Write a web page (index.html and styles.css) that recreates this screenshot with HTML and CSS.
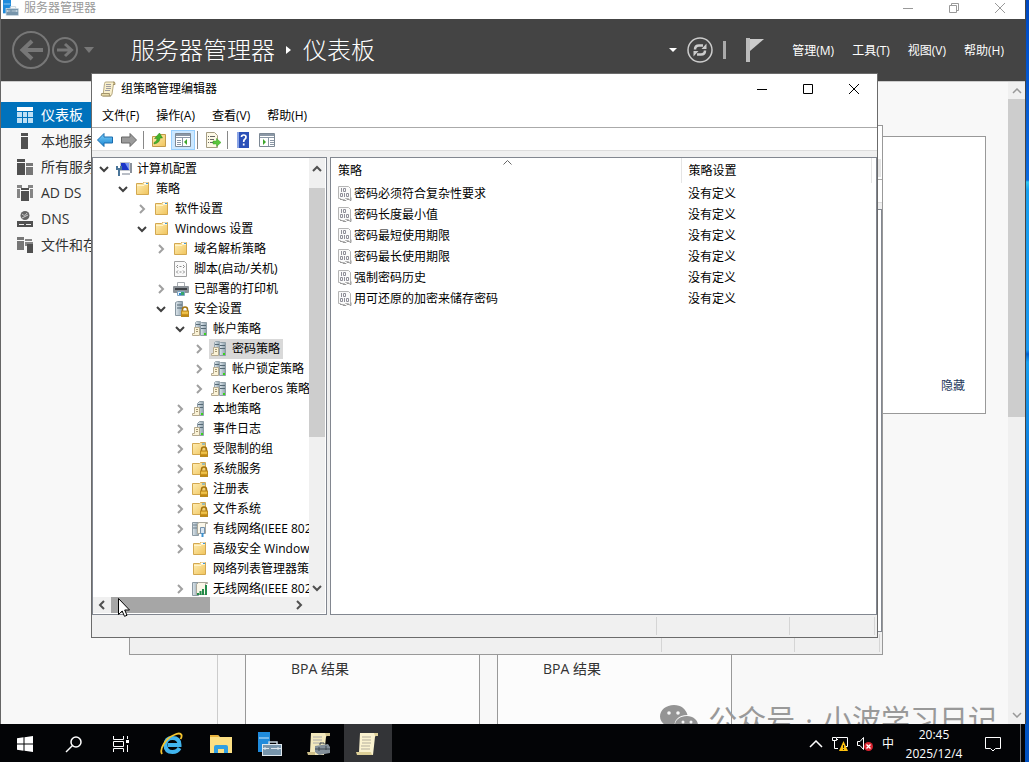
FILE: index.html
```html
<!DOCTYPE html>
<html lang="zh-CN">
<head>
    <meta charset="UTF-8">
    <title>服务器管理器</title>
    <link rel="stylesheet" href="styles.css">
</head>
<body>
    <!-- 图标 -->
    <svg class="defs" aria-hidden="true">
        <defs>
            <linearGradient id="gFolder" x1="0" y1="0" x2="1" y2="1">
                <stop offset="0" stop-color="#ffeeb5"/><stop offset="1" stop-color="#f0c45c"/>
            </linearGradient>
            <linearGradient id="gServer" x1="0" y1="0" x2="1" y2="0">
                <stop offset="0" stop-color="#dfe8ee"/><stop offset="1" stop-color="#8fa1ac"/>
            </linearGradient>
            <linearGradient id="gBlue" x1="0" y1="0" x2="0" y2="1">
                <stop offset="0" stop-color="#7fd0f8"/><stop offset="1" stop-color="#1583d2"/>
            </linearGradient>
            <linearGradient id="gGold" x1="0" y1="0" x2="0" y2="1">
                <stop offset="0" stop-color="#f0bd3c"/><stop offset="1" stop-color="#b57d0c"/>
            </linearGradient>
        </defs>
        <symbol id="i-right" viewBox="0 0 16 16"><path d="M6 4l4 4-4 4" fill="none" stroke="#a0a0a0" stroke-width="2"/></symbol>
        <symbol id="i-down" viewBox="0 0 16 16"><path d="M4 6l4 4 4-4" fill="none" stroke="#404040" stroke-width="2"/></symbol>
        <symbol id="i-folder" viewBox="0 0 16 16">
            <path d="M1.500 2.500h6l1-1h5v12h-12z" fill="url(#gFolder)" stroke="#d3a850"/>
            <path d="M9 2.500h4" stroke="#fff" stroke-width="2"/><path d="M11 2.500h2" stroke="#3d9be0"/>
            <path d="M2 4.500h7l1-1h3" stroke="#fff3cb" fill="none"/>
        </symbol>
        <symbol id="i-lock" viewBox="0 0 16 16">
            <path d="M9.500 10V8.500a2.500 2.500 0 0 1 5 0V10" fill="none" stroke="#a47510" stroke-width="1.500"/>
            <rect x="8.500" y="10" width="7" height="5.500" fill="url(#gGold)" stroke="#b98a20"/>
            <path d="M9 12h6" stroke="#ffd968"/>
        </symbol>
        <symbol id="i-folder-lock" viewBox="0 0 16 16">
            <path d="M.5 2.500h7l1-1h5v12H.5z" fill="url(#gFolder)" stroke="#d3a850"/>
            <path d="M10 3h3" stroke="#3d9be0"/>
            <use href="#i-lock"/>
        </symbol>
        <symbol id="i-server-lock" viewBox="0 0 16 16">
            <path d="M2.500 1.500l2-1h5v14h-7z" fill="url(#gServer)" stroke="#8796a0"/>
            <path d="M4 4h5M4 7h5" stroke="#506470"/>
            <use href="#i-lock"/>
        </symbol>
        <symbol id="i-policy" viewBox="0 0 16 16">
            <path d="M3.500 1.500l1-1h4v9h-5z" fill="url(#gServer)" stroke="#9aa8b1"/>
            <path d="M8.500 2.500l1-1h5v13h-6z" fill="url(#gServer)" stroke="#8f9ea7"/>
            <path d="M9 4.500h5M9 7.500h5M4 3.500h4" stroke="#566975"/>
            <rect x="12" y="12" width="2" height="2" fill="#37d51d"/>
            <path d="M2.500 6.500h5v8h-7v-2h2z" fill="#fbf3d6" stroke="#b5aa90"/>
            <path d="M4 8.500h2M4 10.500h2" stroke="#a39674"/>
        </symbol>
        <symbol id="i-local" viewBox="0 0 16 16">
            <path d="M5.500 2.500l2-2h4v14h-6z" fill="url(#gServer)" stroke="#8f9ea7"/>
            <path d="M6 3.500h5M6 6.500h5" stroke="#566975"/>
            <rect x="9" y="12" width="2" height="2" fill="#37d51d"/>
            <path d="M2.500 6.500h5v8h-7v-2h2z" fill="#fbf3d6" stroke="#b5aa90"/>
            <path d="M4 8.500h2M4 10.500h2" stroke="#a39674"/>
        </symbol>
        <symbol id="i-computer" viewBox="0 0 16 16">
            <rect x="4.500" y="1.500" width="9" height="8" fill="#1b35c8" stroke="#c3c7ce"/>
            <path d="M9 2h4v7z" fill="#7a96f0"/>
            <path d="M14 2h2v10h-2z" fill="#8c929c"/>
            <path d="M6 12h8v2H6z" fill="#b9bec6"/>
            <path d="M3 15V8M1 5v3h4V5" fill="none" stroke="#4a7599" stroke-width="2"/>
        </symbol>
        <symbol id="i-script" viewBox="0 0 16 16">
            <path d="M1.500.5h10l2 2v13h-12z" fill="#fafafa" stroke="#a0a0a0"/>
            <path d="M5 4L3.500 5.500 5 7M10 4l1.500 1.500L10 7M5 9.500L3.500 11 5 12.500M10 9.500l1.500 1.500L10 12.500M6.500 5.500h2M6.500 11h2" fill="none" stroke="#8a8a8a"/>
        </symbol>
        <symbol id="i-printer" viewBox="0 0 16 16">
            <path d="M4.500 1.500h7v4h-7z" fill="#fff" stroke="#a8adb2"/>
            <rect x="0" y="5" width="16" height="7" rx="1" fill="#8c9298"/>
            <path d="M2 7h12v2H2z" fill="#3e4247"/>
            <path d="M4.500 10.500h7v4h-7z" fill="#e8f3fb" stroke="#7fa4c0"/>
            <rect x="8" y="11" width="3" height="3" fill="#35a56c"/><rect x="6" y="12" width="2" height="2" fill="#2e86d5"/>
        </symbol>
        <symbol id="i-wired" viewBox="0 0 16 16">
            <path d="M.5 1.500h6v13h-6z" fill="url(#gServer)" stroke="#8c9aa3"/>
            <path d="M1 4h5M1 7h5" stroke="#6c7f8b"/>
            <path d="M5.500 3.500v9h8v-10h2v-1h-9z" fill="#faf6e8" stroke="#aaa79a"/>
            <path d="M8.500 6.500h4v6h-4z" fill="#d8e6f2" stroke="#7591ac"/><path d="M10.500 12v4" stroke="#3d93d1" stroke-width="2"/>
        </symbol>
        <symbol id="i-wireless" viewBox="0 0 16 16">
            <path d="M.5 1.500h6v13h-6z" fill="url(#gServer)" stroke="#8c9aa3"/>
            <path d="M4.500 3.500v10h9v-11h2v-1h-9z" fill="#faf6e8" stroke="#aaa79a"/>
            <path d="M6 14v-2M8.500 14v-4M11 14V8M14 14V4" stroke="#238b4a" stroke-width="2"/>
        </symbol>
        <symbol id="i-setting" viewBox="0 0 16 16">
            <path d="M.5.5h10l2 2v11h-1l-1-1h-3l-1 1h-3l-1-1h-2z" fill="#fafafa" stroke="#b5b5b5"/>
            <path d="M2 13.500h2l1 1h3l1-1h2l1 1h1v-3" fill="none" stroke="#999"/>
            <path d="M3.500 2v4M5.500 2.500h2v3h-2zM2.500 7.500h2v3h-2zM6.500 7v4M8.500 7.500h2v3h-2z" fill="none" stroke="#8f8f98"/>
        </symbol>
        <symbol id="i-scroll" viewBox="0 0 16 16">
            <path d="M4.500 2.500q0-1.500 1.500-1.500h8.500q-1 1-1 2l-1.500 10q-.5 2-2 2H3z" fill="#f9f0cd" stroke="#b8aa82"/>
            <path d="M1.500 12.500h8q-1 2.500 1 2.500H2.500q-2 0-1-2.500z" fill="#e8dba9" stroke="#a3946c"/>
            <path d="M13 1q2.500 0 2 2.500h-2" fill="#d9c98f" stroke="#a3946c"/>
            <path d="M6 3.500h5M6 5.500h5M6 7.500h5M5 9.500h5" stroke="#9e9ca0"/>
        </symbol>
        <symbol id="i-x" viewBox="0 0 12 12"><path d="M1 1l10 10M11 1L1 11" fill="none" stroke="currentColor"/></symbol>
        <symbol id="i-min" viewBox="0 0 12 12"><path d="M1 6.500h10" stroke="currentColor"/></symbol>
        <symbol id="i-max" viewBox="0 0 12 12"><path d="M1.500 1.500h9v9h-9z" fill="none" stroke="currentColor"/></symbol>
        <symbol id="i-restore" viewBox="0 0 12 12"><path d="M1.500 3.500h7v7h-7zM3.500 3V1.500h7v7H9" fill="none" stroke="currentColor"/></symbol>
        <symbol id="i-manager" viewBox="0 0 24 24">
            <path d="M0 0h12v20H0z" fill="#1f8bdc"/><path d="M1 6h10" stroke="#cfe8fa"/>
            <path d="M11 13v-3h8v3" fill="none" stroke="#c9d6df" stroke-width="1.500"/>
            <rect x="4.500" y="12.500" width="19" height="11" fill="#7795ab" stroke="#dfe8ee"/>
            <path d="M5 16.500h6M13 16.500h10M7 15v3M20 15v3" stroke="#dfe8ee"/>
        </symbol>
    </svg>

    <div class="desktop">
        <div class="manager">
            <div class="manager-title">
                <svg class="icon"><use href="#i-manager"/></svg>
                <span>服务器管理器</span>
                <div class="win-buttons">
                    <button aria-label="最小化"><svg><use href="#i-min"/></svg></button>
                    <button aria-label="还原"><svg><use href="#i-restore"/></svg></button>
                    <button aria-label="关闭"><svg><use href="#i-x"/></svg></button>
                </div>
            </div>

            <header class="manager-header">
                <button class="nav-back" aria-label="后退">
                    <svg width="38" height="38" viewBox="0 0 38 38" fill="none" stroke="#777"><circle cx="19" cy="19" r="18" stroke-width="2"/><path d="M31 19H10M20 10l-9.500 9 9.500 9" stroke-width="4"/></svg>
                </button>
                <button class="nav-forward" aria-label="前进">
                    <svg width="26" height="26" viewBox="0 0 26 26" fill="none" stroke="#777"><circle cx="13" cy="13" r="12" stroke-width="2"/><path d="M5 13h14M13 7l6.500 6-6.500 6" stroke-width="3"/></svg>
                </button>
                <button class="nav-more" aria-label="更多"><svg width="10" height="6"><path d="M0 0h10L5 6z" fill="#777"/></svg></button>
                <h1>服务器管理器<svg width="6" height="8"><path d="M0 0l5 4-5 4z" fill="#fff"/></svg>仪表板</h1>
                <div class="header-tools">
                    <button aria-label="选项"><svg width="8" height="5"><path d="M0 0h8L4 4z" fill="#fff"/></svg></button>
                    <button aria-label="刷新">
                        <svg width="26" height="26" viewBox="0 0 26 26" fill="none" stroke="#ccc"><circle cx="13" cy="13" r="12" stroke-width="1.500"/><path d="M8 12.500q0-4 4-4h4M18 13.500q0 4-4 4h-4" stroke-width="2.500"/><path d="M14.500 12h5V6.500zM11.500 14h-5v5.500z" fill="#ccc" stroke="none"/></svg>
                    </button>
                    <span class="bar"></span>
                    <button aria-label="通知"><svg width="18" height="24"><path d="M0 0h4v24H0z" fill="#bbb"/><path d="M4 1h14L4 13z" fill="#ccc"/></svg></button>
                </div>
                <nav class="header-menu">
                    <a href="#">管理(M)</a><a href="#">工具(T)</a><a href="#">视图(V)</a><a href="#">帮助(H)</a>
                </nav>
            </header>

            <div class="manager-body">
                <nav class="sidebar">
                    <a href="#" class="active"><svg width="16" height="16"><path d="M0 0h16v4H0z" fill="#fff"/><path d="M0 5h5v5H0zM6 5h4v5H6zM11 5h5v5h-5zM0 11h5v5H0zM6 11h4v5H6zM11 11h5v5h-5z" fill="#bfe0f5"/></svg>仪表板</a>
                    <a href="#"><svg width="16" height="16"><path d="M4 0h7v3H4zM4 4h7v12H4z" fill="#505050"/></svg>本地服务器</a>
                    <a href="#"><svg width="16" height="16"><path d="M0 0h8v3H0zM0 4h8v12H0z" fill="#505050"/><path d="M9 4h7v3H9zM9 8h7v8H9z" fill="#777"/></svg>所有服务器</a>
                    <a href="#"><svg width="16" height="16"><path d="M0 0h5v3H0zM0 4h3v9H0zM11 0h5v3h-5zM13 4h3v9h-3z" fill="#858585"/><path d="M4 3h8v2H4zM4 6h8v10H4z" fill="#505050"/></svg>AD DS</a>
                    <a href="#"><svg width="16" height="16"><circle cx="8" cy="4.500" r="4.500" fill="#666"/><path d="M5 3q3 3 5-1M5 7l6-3" stroke="#ccc" fill="none"/><path d="M0 10h16v6H0z" fill="#505050"/><path d="M2 13.500h5M9 13.500h5" stroke="#eee"/></svg>DNS</a>
                    <a href="#"><svg width="16" height="16"><path d="M0 0h7v3H0zM0 4h7v9H0z" fill="#777"/><path d="M8 2h7v2H8zM8 5h8v4H8z" fill="#858585"/><path d="M10 7h6v9h-6z" fill="#505050"/></svg>文件和存储服务</a>
                </nav>
                <main class="content">
                    <section class="welcome"><a href="#">隐藏</a></section>
                    <div class="cards">
                        <section class="card">BPA 结果</section>
                        <section class="card">BPA 结果</section>
                    </div>
                </main>
                <div class="page-scroll">
                    <svg width="10" height="6"><path d="M1 5l4-4 4 4" fill="none" stroke="#999" stroke-width="1.500"/></svg>
                    <div class="thumb"></div>
                    <svg width="10" height="6"><path d="M1 1l4 4 4-4" fill="none" stroke="#999" stroke-width="1.500"/></svg>
                </div>
            </div>
            <div class="watermark">
                <svg width="38" height="30" viewBox="0 0 38 30"><path d="M14 0C6 0 0 5 0 11.500 0 15 2 18 5 20l-1 5 5-3q3 1 6 1C13 16 18 10 27.500 10 26 4 21 0 14 0z" fill="#949494"/><path d="M27 11c-7 0-12 4-12 9s5 9 12 9q2 0 4-.5l4 2-1-3.500c2-2 4-4 4-7 0-5-5-9-11-9z" fill="#949494"/><g fill="#f8f8f8"><circle cx="9" cy="8" r="1.800"/><circle cx="18" cy="8" r="1.800"/><circle cx="23" cy="17" r="1.500"/><circle cx="31" cy="17" r="1.500"/></g></svg>
                <span>公众号</span><span>·</span><span>小波学习日记</span>
            </div>
        </div>

        <!-- 后面的组策略管理窗口 -->
        <div class="window window-back">
            <div class="title-bar"></div>
            <div class="menu-bar"><span class="mdi"></span></div>
            <div class="tool-bar"></div>
            <div class="panes"><div class="list-pane"></div></div>
            <div class="status-bar"><span></span><span></span><span></span></div>
        </div>

        <div class="window window-front">
            <div class="title-bar">
                <svg class="icon"><use href="#i-scroll"/></svg>
                <span>组策略管理编辑器</span>
                <div class="win-buttons">
                    <button aria-label="最小化"><svg><use href="#i-min"/></svg></button>
                    <button aria-label="最大化"><svg><use href="#i-max"/></svg></button>
                    <button aria-label="关闭"><svg><use href="#i-x"/></svg></button>
                </div>
            </div>
            <div class="menu-bar">
                <button>文件(F)</button><button>操作(A)</button><button>查看(V)</button><button>帮助(H)</button>
            </div>
            <div class="tool-bar">
                <button aria-label="后退"><svg class="icon" viewBox="0 0 16 16"><path d="M.5 8L7 1.500V5h8.500v6H7v3.500z" fill="url(#gBlue)" stroke="#1b6cae"/></svg></button>
                <button aria-label="前进"><svg class="icon" viewBox="0 0 16 16"><path d="M15.500 8L9 1.500V5H.5v6H9v3.500z" fill="#9b9b9b" stroke="#666"/></svg></button>
                <span class="sep"></span>
                <button aria-label="上一级"><svg class="icon" viewBox="0 0 16 16"><path d="M1.500 4.500h7l1-2h5v12h-13z" fill="url(#gFolder)" stroke="#c29a4a"/><path d="M3 10.500q3-1 3-4H3.500L8.500 1l3 5H9q0 5-6 6z" fill="#43b32b" stroke="#2a8018" stroke-width=".5"/></svg></button>
                <button class="on" aria-label="显示控制台树"><svg class="icon" viewBox="0 0 16 16"><path d="M.5 1.500h15v13H.5z" fill="#fff" stroke="#7c8894"/><path d="M1 3h14" stroke="#8b98a6" stroke-width="2"/><path d="M1 5.500h14M7.500 6v8M2 8.500h4M2 10.500h4M2 12.500h4" stroke="#8b98a6"/><path d="M12 7v6L9 10z" fill="#3da62c"/></svg></button>
                <span class="sep"></span>
                <button aria-label="导出列表"><svg class="icon" viewBox="0 0 16 16"><path d="M1.500.5h8l3 3v12h-11z" fill="#fdf9e6" stroke="#a59d82"/><path d="M3 4.500h1M5 4.500h5M3 7.500h1M5 7.500h4M3 10.500h1M5 10.500h4" stroke="#666"/><path d="M8 9h3.500V6.500L16 10.500l-4.500 4V12H8z" fill="#5ac63c" stroke="#3a9a24" stroke-width=".5"/></svg></button>
                <span class="sep"></span>
                <button aria-label="帮助"><svg class="icon" viewBox="0 0 16 16"><path d="M2 0h12v16H2z" fill="#2b50b8"/><path d="M2 0h2v16H2z" fill="#8ba5e6"/><path d="M6.500 5q0-2 2.200-2T11 5q0 1.500-1.200 2.200T8.700 10M8.700 11.500v2" fill="none" stroke="#fff" stroke-width="1.700"/></svg></button>
                <button aria-label="显示操作窗格"><svg class="icon" viewBox="0 0 16 16"><path d="M.5 1.500h15v13H.5z" fill="#fff" stroke="#7c8894"/><path d="M1 3h14" stroke="#8b98a6" stroke-width="2"/><path d="M1 5.500h14M9.500 6v8M11 8.500h4M11 10.500h4M11 12.500h4" stroke="#8b98a6"/><path d="M4 7v6l3-3z" fill="#3da62c"/></svg></button>
            </div>
            <div class="panes">
                <div class="tree-pane">
                    <div class="tree">
                        <ul>
                            <li><div class="node"><svg class="icon"><use href="#i-down"/></svg><span><svg class="icon"><use href="#i-computer"/></svg>计算机配置</span></div>
                            <ul>
                                <li><div class="node"><svg class="icon"><use href="#i-down"/></svg><span><svg class="icon"><use href="#i-folder"/></svg>策略</span></div>
                                <ul>
                                    <li><div class="node"><svg class="icon"><use href="#i-right"/></svg><span><svg class="icon"><use href="#i-folder"/></svg>软件设置</span></div></li>
                                    <li><div class="node"><svg class="icon"><use href="#i-down"/></svg><span><svg class="icon"><use href="#i-folder"/></svg>Windows 设置</span></div>
                                    <ul>
                                        <li><div class="node"><svg class="icon"><use href="#i-right"/></svg><span><svg class="icon"><use href="#i-folder"/></svg>域名解析策略</span></div></li>
                                        <li><div class="node"><svg class="icon"></svg><span><svg class="icon"><use href="#i-script"/></svg>脚本(启动/关机)</span></div></li>
                                        <li><div class="node"><svg class="icon"><use href="#i-right"/></svg><span><svg class="icon"><use href="#i-printer"/></svg>已部署的打印机</span></div></li>
                                        <li><div class="node"><svg class="icon"><use href="#i-down"/></svg><span><svg class="icon"><use href="#i-server-lock"/></svg>安全设置</span></div>
                                        <ul>
                                            <li><div class="node"><svg class="icon"><use href="#i-down"/></svg><span><svg class="icon"><use href="#i-policy"/></svg>帐户策略</span></div>
                                            <ul>
                                                <li><div class="node"><svg class="icon"><use href="#i-right"/></svg><span class="selected"><svg class="icon"><use href="#i-policy"/></svg>密码策略</span></div></li>
                                                <li><div class="node"><svg class="icon"><use href="#i-right"/></svg><span><svg class="icon"><use href="#i-policy"/></svg>帐户锁定策略</span></div></li>
                                                <li><div class="node"><svg class="icon"><use href="#i-right"/></svg><span><svg class="icon"><use href="#i-policy"/></svg>Kerberos 策略</span></div></li>
                                            </ul></li>
                                            <li><div class="node"><svg class="icon"><use href="#i-right"/></svg><span><svg class="icon"><use href="#i-local"/></svg>本地策略</span></div></li>
                                            <li><div class="node"><svg class="icon"><use href="#i-right"/></svg><span><svg class="icon"><use href="#i-local"/></svg>事件日志</span></div></li>
                                            <li><div class="node"><svg class="icon"><use href="#i-right"/></svg><span><svg class="icon"><use href="#i-folder-lock"/></svg>受限制的组</span></div></li>
                                            <li><div class="node"><svg class="icon"><use href="#i-right"/></svg><span><svg class="icon"><use href="#i-folder-lock"/></svg>系统服务</span></div></li>
                                            <li><div class="node"><svg class="icon"><use href="#i-right"/></svg><span><svg class="icon"><use href="#i-folder-lock"/></svg>注册表</span></div></li>
                                            <li><div class="node"><svg class="icon"><use href="#i-right"/></svg><span><svg class="icon"><use href="#i-folder-lock"/></svg>文件系统</span></div></li>
                                            <li><div class="node"><svg class="icon"><use href="#i-right"/></svg><span><svg class="icon"><use href="#i-wired"/></svg>有线网络(IEEE 802.3)策略</span></div></li>
                                            <li><div class="node"><svg class="icon"><use href="#i-right"/></svg><span><svg class="icon"><use href="#i-folder"/></svg>高级安全 Windows Defender 防火墙</span></div></li>
                                            <li><div class="node"><svg class="icon"></svg><span><svg class="icon"><use href="#i-folder"/></svg>网络列表管理器策略</span></div></li>
                                            <li><div class="node"><svg class="icon"><use href="#i-right"/></svg><span><svg class="icon"><use href="#i-wireless"/></svg>无线网络(IEEE 802.11)策略</span></div></li>
                                        </ul></li>
                                    </ul></li>
                                </ul></li>
                            </ul></li>
                        </ul>
                    </div>
                    <div class="v-scroll">
                        <svg width="10" height="8"><path d="M1 6l4-4 4 4" fill="none" stroke="#505050" stroke-width="2"/></svg>
                        <div class="thumb"></div>
                        <svg width="10" height="8"><path d="M1 2l4 4 4-4" fill="none" stroke="#505050" stroke-width="2"/></svg>
                    </div>
                    <div class="h-scroll">
                        <svg width="8" height="10"><path d="M6 1L2 5l4 4" fill="none" stroke="#505050" stroke-width="2"/></svg>
                        <div class="thumb"></div>
                        <svg width="8" height="10"><path d="M2 1l4 4-4 4" fill="none" stroke="#505050" stroke-width="2"/></svg>
                    </div>
                </div>
                <div class="list-pane">
                    <svg class="sort" width="9" height="5"><path d="M.5 4.500l4-4 4 4" fill="none" stroke="#666"/></svg>
                    <table>
                        <thead><tr><th>策略</th><th>策略设置</th></tr></thead>
                        <tbody>
                            <tr><td><svg class="icon"><use href="#i-setting"/></svg>密码必须符合复杂性要求</td><td>没有定义</td></tr>
                            <tr><td><svg class="icon"><use href="#i-setting"/></svg>密码长度最小值</td><td>没有定义</td></tr>
                            <tr><td><svg class="icon"><use href="#i-setting"/></svg>密码最短使用期限</td><td>没有定义</td></tr>
                            <tr><td><svg class="icon"><use href="#i-setting"/></svg>密码最长使用期限</td><td>没有定义</td></tr>
                            <tr><td><svg class="icon"><use href="#i-setting"/></svg>强制密码历史</td><td>没有定义</td></tr>
                            <tr><td><svg class="icon"><use href="#i-setting"/></svg>用可还原的加密来储存密码</td><td>没有定义</td></tr>
                        </tbody>
                    </table>
                </div>
            </div>
            <div class="status-bar"><span></span><span></span><span></span></div>
        </div>

        <footer class="taskbar">
            <button aria-label="开始"><svg width="16" height="16"><path d="M0 2.200L6.500 1.300V7.500H0zM7.500 1.200L16 0v7.500H7.500zM0 8.500h6.500v6.200L0 13.800zM7.500 8.500H16V16l-8.500-1.200z" fill="#fff"/></svg></button>
            <button aria-label="搜索"><svg width="17" height="17" fill="none" stroke="#fff" stroke-width="1.500"><circle cx="11" cy="6" r="5"/><path d="M7.500 9.500L1 16"/></svg></button>
            <button aria-label="任务视图"><svg width="18" height="16" fill="none" stroke="#fff"><path d="M1.500 0v3.500h10V0M1.500 16v-3.500h10V16M1.500 5.500h10v5h-10zM15.500 0v3M15.500 9v7"/><path d="M14 4h3v3h-3z" fill="#fff" stroke="none"/></svg></button>
            <div class="apps">
                <button aria-label="Internet Explorer"><svg width="24" height="24" viewBox="0 0 24 24" fill="none"><path d="M19.500 16q-2 4-7 4-7 0-7-7t7-7 7 7H8" stroke="#41b5ee" stroke-width="4"/><path d="M2 22C-1 17 6 6 14 3q6-3 7.500 0 .5 2-1 4" stroke="#f4c430" stroke-width="1.800"/></svg></button>
                <button aria-label="文件资源管理器"><svg width="22" height="20"><path d="M0 1h8l2 2h12v16H0z" fill="#fbdf83"/><path d="M0 1h8l1 2H0z" fill="#e8b23c"/><path d="M4 19v-6q0-2 2-2h10q2 0 2 2v6h-4v-4H8v4z" fill="#2e9fe2"/></svg></button>
                <button aria-label="服务器管理器"><svg width="24" height="24"><use href="#i-manager"/></svg></button>
                <button aria-label="组策略管理"><svg width="24" height="24" viewBox="0 0 24 24"><path d="M4 1h17l-2 4-2 18H1q2-1 2-3z" fill="#f3e9bd"/><path d="M18 1h5v3h-4zM0 20h8v3H1z" fill="#cfc08a"/><path d="M6 5h9M6 8h9M6 11h9" stroke="#aaa"/><path d="M8 14l13-2 2 3v6l-11 2-4-3z" fill="#84909a"/><path d="M13 13v-2h4v1M8 17h15M12 15v4M19 14v4" stroke="#3e4950" fill="none"/></svg></button>
                <button class="active" aria-label="组策略管理编辑器"><svg width="24" height="24" viewBox="0 0 24 24"><path d="M4 1h17l-2 4-2 18H1q2-1 2-3z" fill="#faf2cf"/><path d="M18 1h4v3h-3zM0 20h15q0 2 2 3H1z" fill="#ddcf97"/><path d="M6 5h9M6 8h9M6 11h9M5 14h9M5 17h9" stroke="#b3ad9c"/></svg></button>
            </div>

            <div class="tray">
                <svg width="14" height="8" fill="none" stroke="#fff" stroke-width="1.500"><path d="M1 7l6-6 6 6"/></svg>
                <svg width="16" height="16"><path d="M.5 1.500h4v3h-4zM5 1.500h10.500v9H12M2.500 5v7.500H6M6 3.500h-1" fill="none" stroke="#fff"/><path d="M11.500 5L16 15H7z" fill="#ffc20e"/><path d="M11.500 9v3M11.500 13v1" stroke="#222"/></svg>
                <svg width="16" height="16"><path d="M.5 5.500H3l3.500-4v12L3 9.500H.500z" fill="none" stroke="#fff"/><circle cx="11.500" cy="10.500" r="4.500" fill="#d8232f"/><path d="M9.500 8.500l4 4M13.500 8.500l-4 4" stroke="#fff" stroke-width="1.300"/></svg>
                <span>中</span>
            </div>
            <div class="clock">20:45<br>2025/12/4</div>
            <button class="notice" aria-label="操作中心"><svg width="16" height="16"><path d="M.5 1.500h15v11h-5l-2.500 2.500-2.500-2.500h-5z" fill="none" stroke="#fff"/></svg></button>
        </footer>

        <svg class="cursor" width="12" height="19"><path d="M.5.500v16l3.700-3.500 2.300 5.300 2.500-1-2.300-5.300h4.800z" fill="#fff" stroke="#000"/></svg>
    </div>
</body>
</html>
```
FILE: styles.css
```css
* {
    box-sizing: border-box;
}
body {
    margin: 0;
    font-family: "Open Sans", "Noto Sans CJK SC", sans-serif;
    font-size: 12px;
    line-height: 20px;
    color: #000;
    overflow: hidden;
}
button {
    display: flex;
    align-items: center;
    justify-content: center;
    padding: 0;
    border: none;
    background: none;
    font: inherit;
    color: inherit;
}
a {
    color: inherit;
    text-decoration: none;
}
svg {
    flex: none;
    display: block;
}
.defs {
    position: absolute;
    width: 0;
    height: 0;
}
.icon {
    width: 16px;
    height: 16px;
}
.desktop {
    position: relative;
    display: flex;
    flex-direction: column;
    height: 100vh;
    padding-right: 3px;
    background: linear-gradient(#0048c0, #0a6ae0 180px, #30c8f0 182px, #18a0f0 190px, #1a98f0 350px, #0060d0 354px, #18a0f0 362px, #0a70d8 500px, #0050c0);
}

/* 服务器管理器 */
.manager {
    position: relative;
    flex: 1;
    min-height: 0;
    display: flex;
    flex-direction: column;
    border-left: 1px solid #666;
    border-right: 1px solid #444;
    background: #f8f8f8;
}
.manager-title {
    display: flex;
    align-items: center;
    gap: 5px;
    height: 19px;
    padding: 0 2px 4px;
    background: #fff;
    color: #999;
}
.win-buttons {
    display: flex;
    margin-left: auto;
}
.win-buttons button {
    width: 46px;
}
.win-buttons svg {
    width: 12px;
    height: 12px;
}
.manager-header {
    display: flex;
    align-items: center;
    height: 63px;
    padding: 0 21px 0 11px;
    border-bottom: 1px solid #ccc;
    background: #444;
    color: #fff;
}
.nav-forward {
    margin: 0 6px 0 2px;
}
.manager-header h1 {
    display: flex;
    align-items: center;
    margin: 0 auto 0 37px;
    font-size: 24px;
    line-height: 32px;
    font-weight: 300;
}
.manager-header h1 svg {
    margin: 0 11px;
}
.header-tools {
    display: flex;
    align-items: center;
    gap: 10px;
    margin-right: 28px;
}
.header-tools .bar {
    width: 3px;
    height: 18px;
    margin-right: 10px;
    background: #aaa;
}
.header-menu {
    display: flex;
    gap: 18px;
    padding-top: 2px;
}
.manager-body {
    flex: 1;
    min-height: 0;
    display: flex;
}
.sidebar {
    width: 217px;
    padding-top: 20px;
    border-right: 1px solid #ccc;
    font-size: 14px;
    color: #333;
}
.sidebar a {
    display: flex;
    align-items: center;
    gap: 8px;
    height: 26px;
    padding-left: 16px;
}
.sidebar .active {
    background: #0072bc;
    color: #fff;
}
.content {
    flex: 1;
    display: flex;
    flex-direction: column;
    gap: 30px;
    padding: 54px 22px 0 27px;
}
.welcome {
    display: flex;
    align-items: flex-end;
    justify-content: flex-end;
    height: 278px;
    padding: 0 20px 17px;
    border: 1px solid #999;
    background: #fff;
    color: #1e395b;
}
.cards {
    flex: 1;
    display: flex;
    gap: 17px;
}
.card {
    display: flex;
    flex-direction: column;
    justify-content: flex-end;
    width: 235px;
    padding: 0 45px 45px;
    border: 1px solid #999;
    border-bottom: none;
    background: #fcfcfc;
    font-size: 14px;
    color: #333;
}
.page-scroll {
    display: flex;
    flex-direction: column;
    align-items: center;
    width: 17px;
    padding: 6px 0;
    background: #f0f0f0;
}
.page-scroll .thumb {
    width: 100%;
    height: 318px;
    margin: 5px 0 auto;
    background: #cdcdcd;
}
.watermark {
    position: absolute;
    right: 28px;
    bottom: -16px;
    display: flex;
    align-items: center;
    gap: 10px;
    font-size: 29px;
    line-height: 40px;
    color: #999;
}

/* 窗口 */
.window {
    position: absolute;
    display: flex;
    flex-direction: column;
    border: 1px solid #6b6b6b;
    background: #f0f0f0;
}
.window-back {
    left: 129px;
    top: 125px;
    width: 754px;
    height: 530px;
    border-color: #999;
}
.window-front {
    left: 91px;
    top: 73px;
    width: 787px;
    height: 565px;
}
.title-bar {
    display: flex;
    align-items: center;
    gap: 5px;
    height: 30px;
    padding-left: 8px;
    background: #fff;
}
.menu-bar {
    display: flex;
    gap: 17px;
    height: 24px;
    padding-left: 10px;
    border-bottom: 1px solid #aaa;
    background: #fff;
}
.menu-bar .mdi {
    width: 40px;
    height: 18px;
    margin: 3px 1px 0 auto;
    background: #e5e5e5;
}
.tool-bar {
    display: flex;
    align-items: center;
    height: 23px;
    padding: 2px 0 0 1px;
    border-bottom: 1px solid #ddd;
    background: #fff;
}
.tool-bar button {
    width: 24px;
    height: 20px;
}
.tool-bar .on {
    border: 1px solid #99d1ff;
    background: #cce8ff;
}
.tool-bar .sep {
    width: 1px;
    height: 18px;
    margin: 0 3px 0 2px;
    background: #888;
}
.panes {
    flex: 1;
    min-height: 0;
    display: flex;
    gap: 3px;
    padding-top: 6px;
}
.tree-pane {
    display: grid;
    grid-template-columns: 1fr 16px;
    grid-template-rows: 1fr 16px;
    width: 235px;
    padding: 0 1px 1px 0;
    border: 1px solid #828790;
    background: #fff;
}
.tree {
    overflow: hidden;
    padding: 1px 0 0 3px;
}
.tree ul {
    margin: 0;
    padding: 0;
    list-style: none;
}
.tree ul ul {
    padding-left: 19px;
}
.node {
    display: flex;
    align-items: center;
    gap: 2px;
    height: 20px;
    white-space: nowrap;
}
.node span {
    display: flex;
    align-items: center;
    gap: 5px;
    height: 20px;
    padding: 0 3px 0 2px;
}
.node .selected {
    background: #d9d9d9;
}
.v-scroll {
    display: flex;
    flex-direction: column;
    align-items: center;
    padding: 7px 0 5px;
    background: #f0f0f0;
}
.v-scroll .thumb {
    width: 100%;
    height: 249px;
    margin: 15px 0 auto;
    background: #cdcdcd;
}
.h-scroll {
    grid-column: 1 / 3;
    display: flex;
    align-items: center;
    padding: 0 22px 0 5px;
    background: #f0f0f0;
}
.h-scroll .thumb {
    width: 99px;
    height: 100%;
    margin: 0 auto 0 5px;
    background: #a6a6a6;
}
.list-pane {
    position: relative;
    flex: 1;
    border: 1px solid #828790;
    background: #fff;
}
.sort {
    position: absolute;
    left: 172px;
    top: 2px;
}
table {
    border-collapse: collapse;
    table-layout: fixed;
    width: 541px;
}
th,
td {
    height: 21px;
    padding: 0 7px;
    text-align: left;
    font-weight: 400;
}
th {
    height: 25px;
    border-right: 1px solid #e5e5e5;
}
th:first-child {
    width: 350px;
}
td .icon {
    display: inline-block;
    vertical-align: -4px;
}
.status-bar {
    display: flex;
    justify-content: flex-end;
    height: 22px;
    padding: 2px 2px 2px 0;
}
.status-bar span {
    width: 133px;
    border-right: 1px solid #d5d5d5;
}
.status-bar span:last-child {
    width: 85px;
}

/* 任务栏 */
.taskbar {
    position: relative;
    flex: none;
    display: flex;
    height: 38px;
    margin-right: 1px;
    padding-left: 1px;
    background: #030406;
    color: #fff;
}
.taskbar button {
    width: 48px;
    padding-top: 2px;
}
.apps {
    display: flex;
    gap: 1px;
    margin-left: 3px;
}
.taskbar .active {
    background: #333437;
}
.tray {
    display: flex;
    align-items: center;
    gap: 9px;
    margin-left: auto;
    padding: 2px 9px 0 0;
}
.clock {
    width: 62px;
    padding-top: 1px;
    line-height: 19px;
    text-align: center;
}
.taskbar .notice {
    width: 56px;
    margin-right: 4px;
    border-right: 1px solid #777;
}
.cursor {
    position: absolute;
    left: 118px;
    top: 598px;
}
```
